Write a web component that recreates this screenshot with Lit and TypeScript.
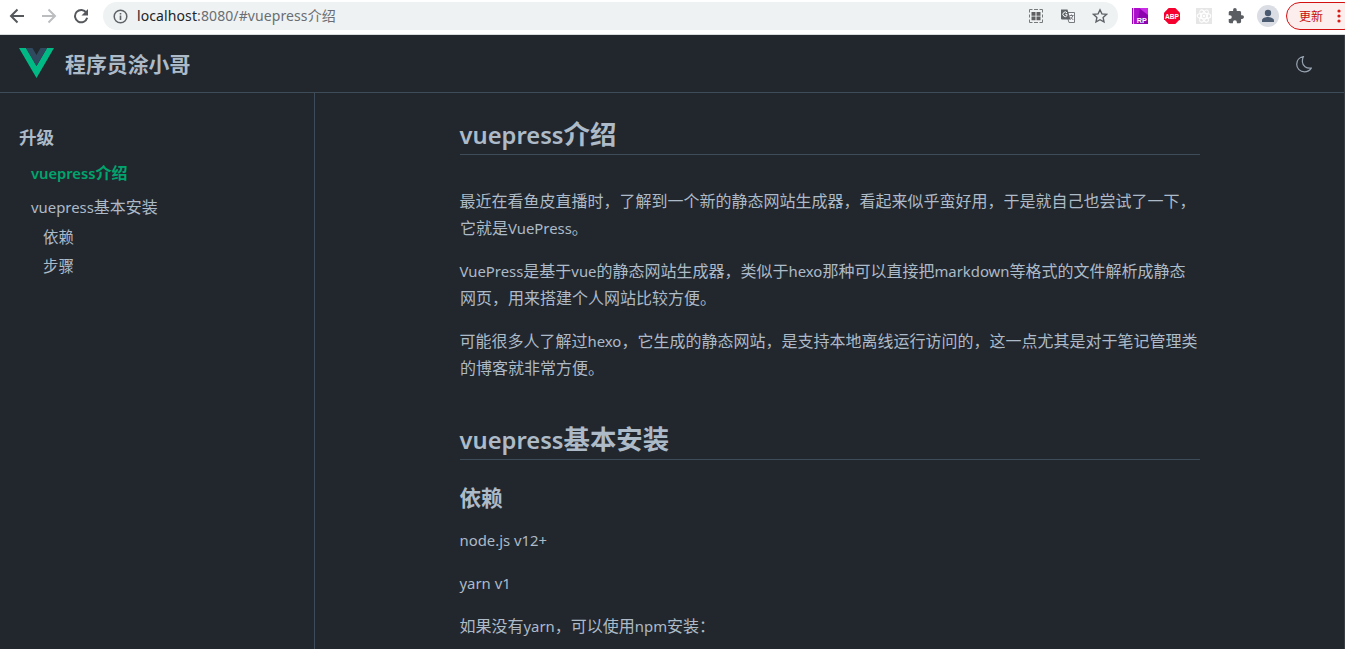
import { LitElement, html, css } from "lit";
import { customElement } from "lit/decorators.js";

@customElement("browser-bar")
class BrowserBar extends LitElement {
  static styles = css`
    :host { display: flex; height: 34px; box-sizing: content-box; background: #fff; border-bottom: 1px solid #d9dcdf; font-family: "Noto Sans", "Noto Sans CJK SC", sans-serif; align-items: flex-start; overflow: hidden; }
    svg { display: block; flex: none; }
    .nav { display: flex; gap: 16px; padding: 8px 0 0 9px; width: 94px; flex: none; }
    .pill { display: flex; align-items: center; width: 1015px; height: 28px; margin-top: 2px; border-radius: 14px; background: #eff2f3; flex: none; }
    .info { margin-left: 10px; }
    .url { margin-left: 9px; font-size: 14px; letter-spacing: 0.1px; line-height: 28px; color: #6a6e72; white-space: nowrap; flex: 1; }
    .url b { font-weight: 400; color: #222427; }
    .tools { display: flex; gap: 16px; padding-right: 10px; }
    .ext { display: flex; gap: 16px; margin: 8px 0 0 14px; flex: none; }
    .avatar { margin: 5px 0 0 13px; }
    .update { display: flex; align-items: center; box-sizing: border-box; margin: 2px 0 0 7px; width: 72px; height: 28px; border: 1px solid #d40f0f; border-radius: 14px; background: #fdeeee; color: #c5100c; font-size: 12px; padding-left: 12px; flex: none; }
    .update svg { margin-left: 14px; }
  `;
  render() {
    return html`
      <div class="nav">
        <svg width="16" height="16" viewBox="0 0 16 16" fill="none" stroke="#55595d" stroke-width="2"><path d="M15 8H2.500M8.500 1.500 2 8l6.500 6.500"/></svg>
        <svg width="16" height="16" viewBox="0 0 16 16" fill="none" stroke="#bbbdbf" stroke-width="2"><path d="M1 8h12.500M7.500 1.500 14 8l-6.500 6.500"/></svg>
        <svg width="16" height="16" viewBox="0 0 16 16"><path d="M13.400 4.700A6.200 6.200 0 1 0 14.200 9.800" fill="none" stroke="#55595d" stroke-width="2"/><path d="M15 1v6.500H8.500z" fill="#55595d"/></svg>
      </div>
      <div class="pill">
        <svg class="info" width="15" height="15" viewBox="0 0 15 15"><circle cx="7.500" cy="7.500" r="6.300" fill="none" stroke="#5f6368" stroke-width="1.500"/><path d="M6.700 6.500h1.600V11H6.700zM6.700 3.900h1.600v1.600H6.700z" fill="#5f6368"/></svg>
        <div class="url"><b>localhost</b>:8080/#vuepress介绍</div>
        <div class="tools">
          <svg width="16" height="16" viewBox="0 0 16 16"><path d="M1.500 4.500v-3h3M11.500 1.500h3v3M14.500 11.500v3h-3M4.500 14.500h-3v-3M6 1.500h4M6 14.500h4M1.500 6.500v3M14.500 6.500v3" stroke="#77797c" fill="none"/><path d="M3.500 4h4v3.700h-4zM8.500 4h4v3.700h-4zM3.500 8.500h4v3.700h-4zM8.500 8.500h4v3.700h-4z" fill="#5f6063"/></svg>
          <svg width="16" height="16" viewBox="0 0 16 16"><path d="M6 4.500h8.500v10H9z" fill="#f5f6f7" stroke="#777a7e"/><path d="M1 1.500h6.500l3 10H2a1 1 0 0 1-1-1z" fill="#5f6368"/><path d="M7 4.800A2.300 2.300 0 1 0 7 7.700V6.300H5.200" stroke="#fff" fill="none"/><path d="M9.500 7.500h4M11.500 6.500v1M13 7.500q-.7 2.500-3 4M10.500 9l2.800 3" stroke="#777a7e" fill="none"/></svg>
          <svg width="16" height="16" viewBox="0 0 16 16"><path d="m8 1.800 1.900 4.100 4.500.5-3.300 3 .9 4.500L8 11.700l-4 2.200.9-4.500-3.300-3 4.500-.5z" fill="none" stroke="#5f6368" stroke-width="1.400"/></svg>
        </div>
      </div>
      <div class="ext">
        <svg width="16" height="16" viewBox="0 0 16 16"><path d="M0 0h1.300v16H0z" fill="#9c00c0"/><path d="M2.200 0H16v16H2.200z" fill="#8d04ae"/><path d="M7 0h9v7z" fill="#ca2ce5"/><path d="M2.200 0H8L5 16H2.200z" fill="#ad0ccc"/><text x="4.800" y="14.600" textLength="10" lengthAdjust="spacingAndGlyphs" font-size="8" font-weight="700" font-family="Liberation Sans, sans-serif" fill="#fff">RP</text></svg>
        <svg width="16" height="16" viewBox="0 0 16 16" overflow="visible"><path d="M4.700 0h6.600L16 4.700v6.600L11.300 16H4.700L0 11.300V4.700z" fill="#f5002f"/><text x="1" y="10.800" textLength="14" lengthAdjust="spacingAndGlyphs" font-size="8" font-weight="700" font-family="Liberation Sans, sans-serif" fill="#fff">ABP</text></svg>
        <svg width="16" height="16" viewBox="0 0 16 16"><path d="M0 0h16v16H0z" fill="#e6e6e6"/><g fill="none" stroke="#fff" stroke-width="1.100"><ellipse cx="8" cy="8" rx="6.800" ry="2.700"/><ellipse cx="8" cy="8" rx="6.800" ry="2.700" transform="rotate(60 8 8)"/><ellipse cx="8" cy="8" rx="6.800" ry="2.700" transform="rotate(120 8 8)"/></g><circle cx="8" cy="8" r="1.300" fill="#fff"/></svg>
        <svg width="16" height="16" viewBox="1 1 22 22"><path fill="#5a5e63" d="M20.500 11H19V7c0-1.100-.9-2-2-2h-4V3.500a2.500 2.500 0 0 0-5 0V5H4c-1.100 0-2 .9-2 2v3.800h1.500a2.700 2.700 0 0 1 0 5.400H2V20c0 1.100.9 2 2 2h3.800v-1.500a2.700 2.700 0 0 1 5.400 0V22H17c1.100 0 2-.9 2-2v-4h1.500a2.500 2.500 0 0 0 0-5z"/></svg>
      </div>
      <svg class="avatar" width="22" height="22" viewBox="0 0 22 22"><circle cx="11" cy="11" r="11" fill="#dadde3"/><circle cx="11" cy="8" r="3.200" fill="#4b5b70"/><path d="M5 17v-1.600c0-2.200 3.500-3.400 6-3.400s6 1.200 6 3.400V17z" fill="#4b5b70"/></svg>
      <div class="update">更新<svg width="4" height="14" viewBox="0 0 4 14" fill="#d91a12"><circle cx="2" cy="2" r="1.600"/><circle cx="2" cy="7" r="1.600"/><circle cx="2" cy="12" r="1.600"/></svg></div>
    `;
  }
}

@customElement("app-root")
class AppRoot extends LitElement {
  static styles = css`
    :host { display: flex; flex-direction: column; width: 1345px; height: 649px; overflow: hidden; background: #22272e; color: #adbac7; font: 16px/27px "Noto Sans", "Noto Sans CJK SC", sans-serif; }
    browser-bar { flex: none; }
    i { font-style: normal; font-size: 0.93em; }
    .page { display: flex; flex-direction: column; flex: 1; min-height: 0; box-sizing: border-box; border-right: 1px solid #3a3e44; }
    .top { display: flex; box-sizing: border-box; height: 58px; border-bottom: 1px solid #3e4c5a; padding: 12px 32px 0 19px; flex: none; }
    .logo { display: block; }
    .title { margin-left: 11px; font-size: 20.900px; line-height: 34px; font-weight: 700; flex: 1; }
    .moon { margin-top: 9px; }
    .body { display: flex; flex: 1; min-height: 0; }
    aside { box-sizing: border-box; width: 315px; border-right: 1px solid #3e4c5a; padding: 31px 0 0 19px; flex: none; }
    .group { font-size: 17.600px; line-height: 26px; font-weight: 700; }
    .item { padding-left: 12px; line-height: 22px; margin-top: 12px; }
    .active { color: #00a56e; font-weight: 600; }
    .active i { font-size: 0.92em; }
    .sub { padding-left: 24px; font-size: 15.400px; line-height: 21px; margin-top: 8px; }
    .item + .sub { margin-top: 9px; }
    main { width: 740px; margin-left: 145px; white-space: nowrap; }
    h2 { margin: 0; box-sizing: border-box; height: 62px; padding-top: 25px; font-size: 26.400px; line-height: 33px; font-weight: 700; border-bottom: 1px solid #3e4c5a; text-indent: -0.5px; }
    h2 i { font-weight: 600; font-size: 0.9em; }
    .first { margin-bottom: 33px; }
    h3 { margin: 23px 0 15px; font-size: 21.600px; line-height: 29px; text-indent: -0.5px; }
    p { margin: 0 0 16px; text-indent: -0.5px; }
  `;
  render() {
    return html`
      <browser-bar></browser-bar>
      <div class="page">
      <header class="top">
        <svg class="logo" width="35" height="31" viewBox="0 0 35 31"><path d="M0 1h7l10.500 18L28 1h7L17.500 31z" fill="#00b985"/><path d="M7 1h6.500l4 7 4-7H28L17.500 19z" fill="#2f495e"/></svg>
        <div class="title">程序员涂小哥</div>
        <svg class="moon" width="16" height="17" viewBox="0 0 16 17" fill="none" stroke="#98a5b1" stroke-width="1.200"><path d="M7.300.7C3.500 1.300.7 4.300.7 8.200c0 4.300 3.400 7.600 7.700 7.600 2.900 0 5.400-1.300 6.900-3.700-5.200.6-8.600-2.100-8.900-6.100-.1-2 .2-3.800.9-5.300z"/></svg>
      </header>
      <div class="body">
        <aside>
          <div class="group">升级</div>
          <div class="item active"><i>vuepress</i>介绍</div>
          <div class="item"><i>vuepress</i>基本安装</div>
          <div class="sub">依赖</div>
          <div class="sub">步骤</div>
        </aside>
        <main>
          <h2 class="first"><i>vuepress</i>介绍</h2>
          <p>最近在看鱼皮直播时，了解到一个新的静态网站生成器，看起来似乎蛮好用，于是就自己也尝试了一下，<br>它就是<i>VuePress</i>。</p>
          <p><i>VuePress</i>是基于<i>vue</i>的静态网站生成器，类似于<i>hexo</i>那种可以直接把<i>markdown</i>等格式的文件解析成静态<br>网页，用来搭建个人网站比较方便。</p>
          <p>可能很多人了解过<i>hexo</i>，它生成的静态网站，是支持本地离线运行访问的，这一点尤其是对于笔记管理类<br>的博客就非常方便。</p>
          <h2><i>vuepress</i>基本安装</h2>
          <h3>依赖</h3>
          <p><i>node.js v12+</i></p>
          <p><i>yarn v1</i></p>
          <p>如果没有<i>yarn</i>，可以使用<i>npm</i>安装：</p>
        </main>
      </div>
      </div>
    `;
  }
}
